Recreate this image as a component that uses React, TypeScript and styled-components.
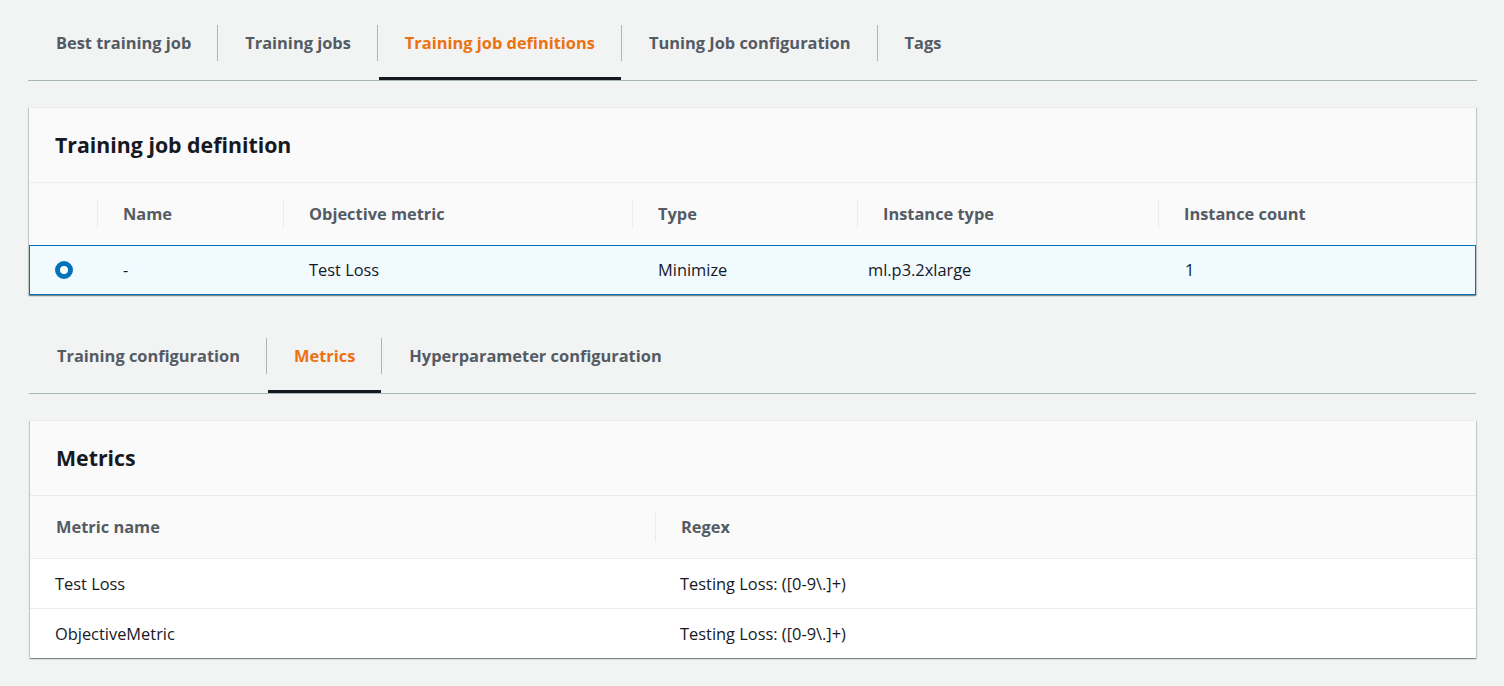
import React from "react";
import styled, { createGlobalStyle, css } from "styled-components";

const GlobalStyle = createGlobalStyle`
  html, body {
    margin: 0;
    padding: 0;
    background: #f2f3f3;
    font-family: "Open Sans", "Noto Sans", Arial, sans-serif;
    color: #16191f;
    -webkit-font-smoothing: antialiased;
  }
  * { box-sizing: border-box; }
`;

const Page = styled.div`
  width: 1449px;
  margin-left: 28px;
  display: flex;
  flex-direction: column;
  padding-bottom: 26px;
`;

const TabList = styled.div<{ $inset?: boolean }>`
  display: flex;
  border-bottom: 1px solid #aab7b8;
  margin: ${(p) => (p.$inset ? "18px 1px 0 1px" : "0")};
`;

const Tab = styled.div<{ $active?: boolean }>`
  position: relative;
  height: 80px;
  padding-top: 25px;
  font-size: 16.4px;
  font-weight: 700;
  color: ${(p) => (p.$active ? "#ec7211" : "#545b64")};
  ${(p) =>
    p.$active &&
    css`
      &::after {
        content: "";
        position: absolute;
        left: 2px;
        right: 0;
        bottom: 0;
        height: 3px;
        background: #16191f;
      }
    `}
`;

const TabLabel = styled.div<{ $first?: boolean }>`
  height: 36px;
  line-height: 36px;
  padding: 0 26px 0 ${(p) => (p.$first ? "28px" : "27px")};
  border-left: ${(p) => (p.$first ? "none" : "1px solid #aab7b8")};
  white-space: nowrap;
`;

const Panel = styled.section<{ $inset?: boolean }>`
  margin: 26px 1px 0 ${(p) => (p.$inset ? "2px" : "1px")};
  background: #fafafa;
  border-top: 1px solid #eaeded;
  box-shadow: 0 1px 1px 0 rgba(0, 28, 36, 0.3),
    1px 1px 1px 0 rgba(0, 28, 36, 0.15), -1px 1px 1px 0 rgba(0, 28, 36, 0.15);
`;

const PanelHeader = styled.div`
  height: 75px;
  display: flex;
  align-items: center;
  padding-left: 26px;
  padding-bottom: 1px;
  border-bottom: 1px solid #eaeded;
`;

const PanelTitle = styled.h2`
  margin: 0;
  font-size: 21.3px;
  font-weight: 700;
  color: #16191f;
`;

const HeaderRow = styled.div<{ $cols: string }>`
  display: grid;
  grid-template-columns: ${(p) => p.$cols};
  height: 62px;
  align-items: center;
  background: #fafafa;
`;

const HeaderCell = styled.div<{ $sep?: boolean }>`
  height: 30px;
  line-height: 29px;
  padding-left: ${(p) => (p.$sep ? "25px" : "26px")};
  border-left: ${(p) => (p.$sep ? "1px solid #eaeded" : "none")};
  font-size: 16.4px;
  font-weight: 700;
  color: #545b64;
  white-space: nowrap;
`;

const BodyRow = styled.div<{ $cols: string; $selected?: boolean }>`
  display: grid;
  grid-template-columns: ${(p) => p.$cols};
  height: 50px;
  align-items: center;
  padding-bottom: ${(p) => (p.$selected ? "2px" : "0")};
  background: ${(p) => (p.$selected ? "#f1faff" : "#ffffff")};
  border: ${(p) => (p.$selected ? "1px solid #0073bb" : "none")};
  border-top: 1px solid ${(p) => (p.$selected ? "#0073bb" : "#eaeded")};
`;

const Cell = styled.div`
  padding-left: 25px;
  font-size: 16.4px;
  color: #16191f;
  white-space: nowrap;
`;

const RadioCell = styled.div`
  display: flex;
  align-items: center;
  padding-left: 25px;
  padding-top: 1px;
`;

const Radio = styled.span`
  width: 18px;
  height: 18px;
  border-radius: 50%;
  border: 5.5px solid #0073bb;
  background: #ffffff;
  display: inline-block;
`;

const defCols = "68px 186px 349px 225px 301px 1fr";
const defBodyCols = "68px 186px 349px 210px 317px 1fr";
const metricCols = "625px 1fr";

const topTabs = [
  "Best training job",
  "Training jobs",
  "Training job definitions",
  "Tuning Job configuration",
  "Tags",
];
const subTabs = ["Training configuration", "Metrics", "Hyperparameter configuration"];

const metrics = [
  { name: "Test Loss", regex: "Testing Loss: ([0-9\\.]+)" },
  { name: "ObjectiveMetric", regex: "Testing Loss: ([0-9\\.]+)" },
];

export default function App() {
  return (
    <>
      <GlobalStyle />
      <Page>
        <TabList>
          {topTabs.map((t, i) => (
            <Tab key={t} $active={i === 2}>
              <TabLabel $first={i === 0}>{t}</TabLabel>
            </Tab>
          ))}
        </TabList>

        <Panel>
          <PanelHeader>
            <PanelTitle>Training job definition</PanelTitle>
          </PanelHeader>
          <HeaderRow $cols={defCols}>
            <HeaderCell />
            <HeaderCell $sep>Name</HeaderCell>
            <HeaderCell $sep>Objective metric</HeaderCell>
            <HeaderCell $sep>Type</HeaderCell>
            <HeaderCell $sep>Instance type</HeaderCell>
            <HeaderCell $sep>Instance count</HeaderCell>
          </HeaderRow>
          <BodyRow $cols={defBodyCols} $selected>
            <RadioCell>
              <Radio />
            </RadioCell>
            <Cell>-</Cell>
            <Cell>Test Loss</Cell>
            <Cell>Minimize</Cell>
            <Cell>ml.p3.2xlarge</Cell>
            <Cell>1</Cell>
          </BodyRow>
        </Panel>

        <TabList $inset>
          {subTabs.map((t, i) => (
            <Tab key={t} $active={i === 1}>
              <TabLabel $first={i === 0}>{t}</TabLabel>
            </Tab>
          ))}
        </TabList>

        <Panel $inset>
          <PanelHeader>
            <PanelTitle>Metrics</PanelTitle>
          </PanelHeader>
          <HeaderRow $cols={metricCols}>
            <HeaderCell>Metric name</HeaderCell>
            <HeaderCell $sep>Regex</HeaderCell>
          </HeaderRow>
          {metrics.map((m) => (
            <BodyRow key={m.name} $cols={metricCols}>
              <Cell>{m.name}</Cell>
              <Cell>{m.regex}</Cell>
            </BodyRow>
          ))}
        </Panel>
      </Page>
    </>
  );
}
